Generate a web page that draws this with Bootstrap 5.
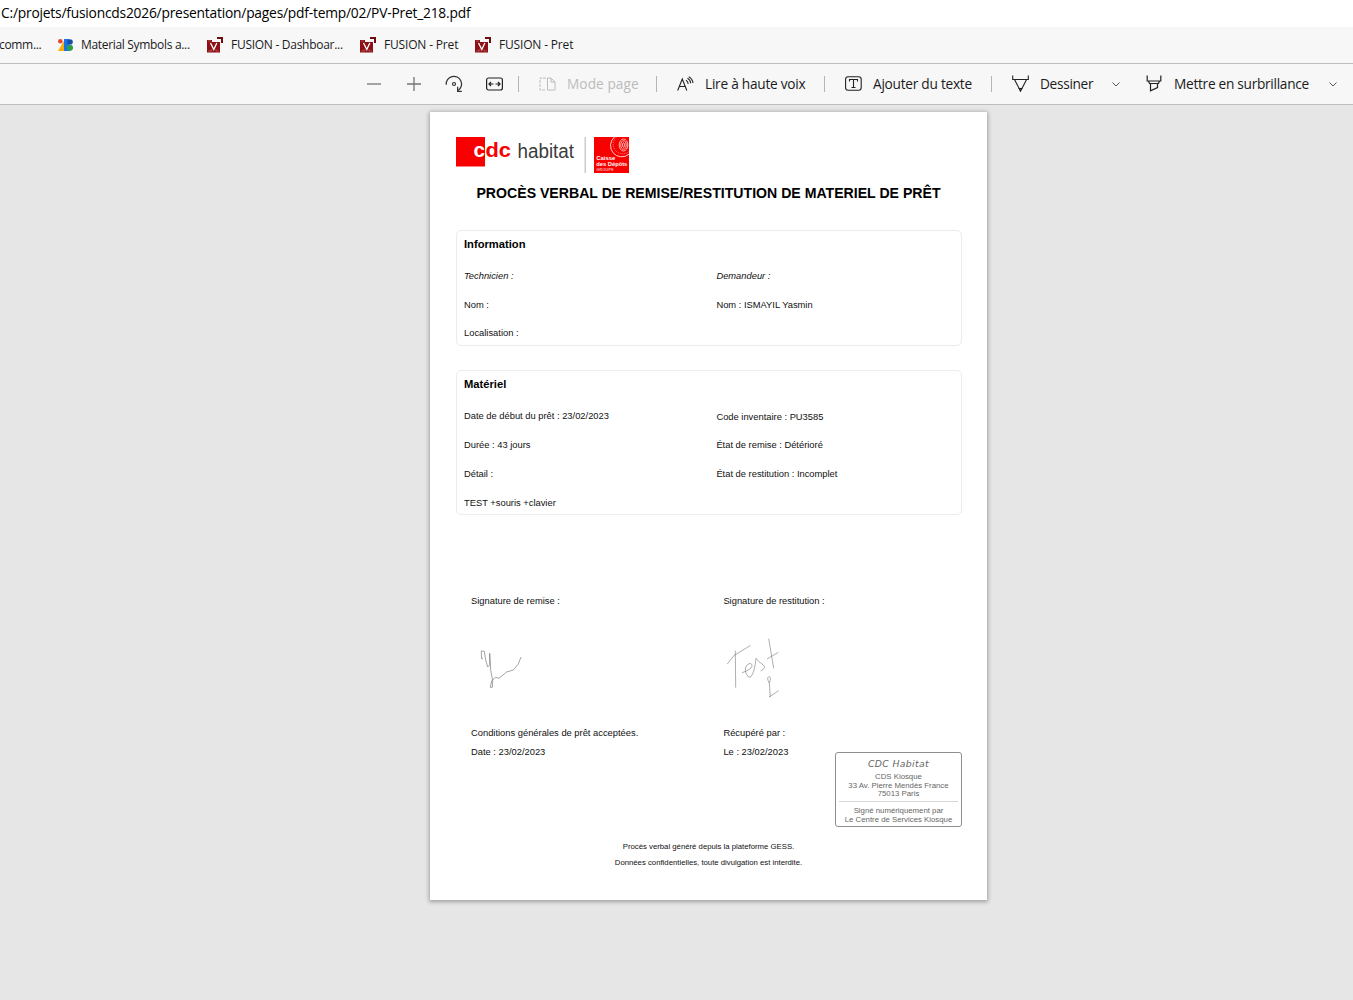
<!DOCTYPE html>
<html lang="fr">
<head>
<meta charset="utf-8">
<title>PV-Pret_218.pdf</title>
<link href="https://cdn.jsdelivr.net/npm/bootstrap@5.3.0/dist/css/bootstrap.min.css" rel="stylesheet">
<style>
body{background:#e6e6e6;font-family:"Open Sans","Noto Sans",sans-serif;color:#1b1b1b;overflow:hidden;height:1000px}
svg{display:block;flex:none}
.addr{height:27px;background:#fff;color:#000;font-size:13.8px;line-height:25px;padding-left:1px;letter-spacing:-.21px}
.favs{height:37px;background:#f7f7f7;border-bottom:1px solid #bdbdbd;font-size:12px;letter-spacing:-.17px}
.favs .fav{height:34px}
.fav svg{margin-right:8px}
.tight{letter-spacing:-.32px}
.tools{height:41px;background:#f7f7f7;border-bottom:1px solid #bdbdbd;font-size:13.7px;letter-spacing:-.26px;padding-left:366px}
.sep{width:1px;height:16px;background:#b5b5b5;flex:none}
.tool svg{margin-right:11px}
.off{color:#bcbcbc;letter-spacing:.05px}
.sheet{width:557px;height:788px;margin:7px 0 0 430px;background:#fff;box-shadow:0 1px 4px 1px rgba(0,0,0,.3);padding:25px 26px 0;font-family:"Liberation Sans",Arial,sans-serif;font-size:9.35px;color:#111;line-height:14px}
.logos{height:36px}
.doc-title{font-size:14.12px;font-weight:700;color:#000;text-align:center;line-height:20px;margin-top:10px}
.box{border:1px solid #ececec;border-radius:5px;width:506px;padding:6px 7px 0}
.box h2{font-size:11.2px;font-weight:700;color:#000;line-height:14px;margin:0 0 11px}
.box .line{line-height:28.6px;height:28.6px}
.b2 .line{line-height:28.9px;height:28.9px}
.half{width:252.4px;flex:none}
.b1{height:116px;margin-top:27px}
.b2{height:145px;margin-top:24px}
.signs{padding-left:15px}
.stamp{width:127px;height:75px;border:1px solid #8e8e8e;border-radius:3px;padding:5px 4px 0;color:#666;font-size:7.8px;line-height:8.7px;text-align:center}
.stamp .hand{font-family:"DejaVu Sans",sans-serif;font-weight:200;font-style:italic;font-size:9.3px;letter-spacing:.35px;line-height:11px;margin-bottom:4px}
.stamp .cut{border-top:1px solid #d8d8d8;margin:2px -1px 5px}
.foot{font-size:7.75px;line-height:16px;text-align:center;margin-top:12px}
</style>
<script src="https://cdn.jsdelivr.net/npm/bootstrap@5.3.0/dist/js/bootstrap.bundle.min.js"></script>
</head>
<body>
<svg width="0" height="0" class="position-absolute"><defs>
<symbol id="fusion" viewBox="0 0 16 16"><path d="M0 3h5v2h8v10.500H0z" fill="#8c1014"/><path d="M10 0h6v6h-2V2h-4z" fill="#6d0d10"/><path d="M1 4h3M1 14h4M9 14h3" stroke="#a94a4a"/><path d="M3.500 6l3.300 6.500 3-6.500" fill="none" stroke="#fff" stroke-width="1.300"/><path d="M3 13h7" stroke="#b96a6a" stroke-width=".6"/></symbol>
</defs></svg>

<div class="addr text-nowrap">C:/projets/fusioncds2026/presentation/pages/pdf-temp/02/PV-Pret_218.pdf</div>

<nav class="favs d-flex align-items-center text-nowrap">
  <div class="fav tight d-flex align-items-center" style="width:59px;margin-left:-1px">comm...</div>
  <div class="fav tight d-flex align-items-center" style="width:149px"><svg width="15" height="12" viewBox="0 0 15 12"><circle cx="2.300" cy="2.300" r="2.300" fill="#ea4335"/><path d="M0 12L6.500 1v11z" fill="#fbad05"/><path d="M6 0h5v12H6z" fill="#1a73e8"/><circle cx="12" cy="3" r="2.800" fill="#174ea6"/><circle cx="12" cy="8.800" r="3.100" fill="#2d9f4b"/></svg>Material Symbols a...</div>
  <div class="fav d-flex align-items-center" style="width:153px;letter-spacing:-.28px"><svg width="16" height="16"><use href="#fusion"/></svg>FUSION - Dashboar...</div>
  <div class="fav d-flex align-items-center" style="width:115px"><svg width="16" height="16"><use href="#fusion"/></svg>FUSION - Pret</div>
  <div class="fav d-flex align-items-center"><svg width="16" height="16"><use href="#fusion"/></svg>FUSION - Pret</div>
</nav>

<div class="tools d-flex align-items-center text-nowrap">
  <svg width="16" height="16" stroke="#767676" stroke-width="1.300"><path d="M1 8h14"/></svg>
  <svg class="ms-4" width="16" height="16" stroke="#767676" stroke-width="1.300"><path d="M1 8h14M8 1v14"/></svg>
  <svg style="margin-left:23px" width="18" height="18" fill="none" stroke="#333" stroke-width="1.200"><path d="M1.200 9.800A7.700 7.700 0 1 1 13 15.500"/><path d="M12.600 11.800v4.500h4.200"/><circle cx="9" cy="9" r="1.500"/></svg>
  <svg style="margin-left:23px" width="17" height="14" fill="none" stroke="#222" stroke-width="1.200"><rect x=".6" y="1" width="15.800" height="12" rx="2"/><path d="M3 7h4.500M9.500 7H14M5 5L3 7l2 2M12 5l2 2-2 2"/></svg>
  <div class="sep" style="margin:0 20px 0 15px"></div>
  <div class="tool off d-flex align-items-center" style="width:117px"><svg width="17" height="14" fill="none" stroke="#bcbcbc"><path d="M7 1H1v12h6" stroke-dasharray="3 1"/><path d="M8.500 1H12l4 4v8H8.500zM12 1v4h4"/></svg>Mode page</div>
  <div class="sep" style="margin-right:20px"></div>
  <div class="tool d-flex align-items-center" style="width:147px"><svg width="17" height="16" fill="none" stroke="#222" stroke-width="1.100"><path d="M.7 14.500L5.300 3 9.800 14.500M2.300 10.500h6M9 4.300q2 1.200 2.200 3.700M10.500 2.300q2.900 1.500 3.200 5M11.800.7q3.600 1.800 4.200 6.300"/></svg>Lire à haute voix</div>
  <div class="sep" style="margin-right:20px"></div>
  <div class="tool d-flex align-items-center" style="width:146px"><svg width="17" height="15" fill="none" stroke="#222" stroke-width="1.100"><rect x=".6" y=".8" width="15.600" height="13.400" rx="2.500"/><path d="M4.500 5.500v-2h8v2M8.500 3.500v8M6.500 11.500h4"/></svg>Ajouter du texte</div>
  <div class="sep" style="margin-right:20px"></div>
  <div class="tool d-flex align-items-center" style="width:100px;letter-spacing:-.32px"><svg width="17" height="17" fill="none" stroke="#222" stroke-width="1.100"><path d="M.7.500v4h15.600v-4M2.500 4.500l4.800 9.300h2.500l4.800-9.300"/><path d="M7.200 13.500h2.600l-1.300 2.800z" fill="#666"/></svg>Dessiner</div>
  <svg width="8" height="5" fill="none" stroke="#555"><path d="M.5.500L4 4 7.500.500"/></svg>
  <div class="tool d-flex align-items-center" style="width:183px;margin-left:26px;letter-spacing:-.29px"><svg width="17" height="17" fill="none" stroke="#222" stroke-width="1.200"><path d="M1.200.500v5.500h13.600v-5.500M2.500 6l1 2.500h9l1-2.500M4.500 8.500v7.300l7-3.300V8.500"/></svg>Mettre en surbrillance</div>
  <svg width="8" height="5" fill="none" stroke="#555"><path d="M.5.500L4 4 7.500.500"/></svg>
</div>

<main class="sheet text-nowrap">
  <div class="logos">
    <svg width="174" height="36" font-family="Liberation Sans,Arial,sans-serif"><path d="M0 0h29v29.500H0z" fill="#f80000"/><text x="17.500" y="20" font-size="21" font-weight="700" fill="#fff" textLength="11.500" lengthAdjust="spacingAndGlyphs">c</text><text x="29.500" y="20" font-size="21" font-weight="700" fill="#f80000" textLength="25.500" lengthAdjust="spacingAndGlyphs">dc</text><text x="61.500" y="21" font-size="19.500" fill="#3b3b3b" textLength="56.500" lengthAdjust="spacingAndGlyphs">habitat</text><path d="M128.500 0h1.500v36h-1.500z" fill="#ccc"/><path d="M138 0h35v36h-35z" fill="#f80000"/><g fill="none" stroke="#fff"><path d="M158.500 0a9.500 9.500 0 0 0 14.500 17.200" stroke-width="1" opacity=".8"/><path d="M160.500 0a8 8 0 0 0 12.500 14.500" stroke-width=".5" stroke-dasharray="1 1"/><ellipse cx="167.500" cy="8" rx="4.300" ry="6" stroke-width=".7"/><ellipse cx="167.500" cy="8" rx="2.700" ry="4.200" stroke-width=".7"/><ellipse cx="167.500" cy="8" rx="1" ry="2.300" stroke-width=".7"/></g><g fill="#fff"><text x="140.300" y="23" font-size="5.700" font-weight="700" textLength="19" lengthAdjust="spacingAndGlyphs">Caisse</text><text x="140.300" y="29" font-size="5.700" font-weight="700" textLength="31" lengthAdjust="spacingAndGlyphs">des Dépôts</text><text x="140.500" y="33.500" font-size="3.500" textLength="17">GROUPE</text></g></svg>
  </div>
  <h1 class="doc-title mb-0">PROCÈS VERBAL DE REMISE/RESTITUTION DE MATERIEL DE PRÊT</h1>

  <section class="box b1">
    <h2>Information</h2>
    <div class="d-flex">
      <div class="half"><div class="line fst-italic">Technicien :</div><div class="line">Nom :</div><div class="line">Localisation :</div></div>
      <div class="half"><div class="line fst-italic">Demandeur :</div><div class="line">Nom : ISMAYIL Yasmin</div></div>
    </div>
  </section>

  <section class="box b2">
    <h2>Matériel</h2>
    <div class="d-flex">
      <div class="half"><div class="line">Date de début du prêt : 23/02/2023</div><div class="line">Durée : 43 jours</div><div class="line">Détail :</div><div class="line">TEST +souris +clavier</div></div>
      <div class="half" style="padding-top:.6px"><div class="line">Code inventaire : PU3585</div><div class="line">État de remise : Détérioré</div><div class="line">État de restitution : Incomplet</div></div>
    </div>
  </section>

  <div class="signs d-flex" style="margin-top:79px">
    <div class="half">Signature de remise :
      <svg class="mt-4" width="60" height="66" fill="none" stroke="#666" stroke-width=".6"><path transform="translate(0 -1)" stroke-linejoin="round" d="M12 27.700h-1.500L10.300 20l3 .3 1.400 8.700 2 7 2-2V22.300l1 16.700 2 10.700-.4 6.600h-2l1.400-6.600 4-3.400 3.300 1 7.700-6.300 6.600-2 5-6L50 26"/></svg>
    </div>
    <div class="half">Signature de restitution :
      <svg class="mt-4" width="70" height="66" fill="none" stroke="#777" stroke-width=".6"><path transform="translate(0 -1)" d="M4.300 33L11 24.500 27.700 14.300M12.300 19.700l.4 37M19 41.700q9-3 10-6.500 0-4-4-2-4 3-2 9 2 5 4.500 4 4-4 5.500-18.900 2 3 7 6.500 4 3-2.300 6.200M45.700 7.700l5 29.600M44 28l11.300-6.700M46.300 52q-3-5-.5-6.500 3 1 .5 6.500l1 14M46 66l9.700-6.300"/></svg>
    </div>
  </div>

  <div class="signs d-flex" style="margin-top:26px;height:103px">
    <div class="half"><div style="line-height:19px">Conditions générales de prêt acceptées.<br>Date : 23/02/2023</div></div>
    <div class="flex-shrink-0" style="width:111.600px;line-height:19px">Récupéré par :<br>Le : 23/02/2023</div>
    <div class="stamp align-self-end flex-shrink-0">
      <div class="hand">CDC Habitat</div>
      <div>CDS Kiosque</div><div>33 Av. Pierre Mendès France</div><div>75013 Paris</div>
      <div class="cut"></div>
      <div>Signé numériquement par</div><div>Le Centre de Services Kiosque</div>
    </div>
  </div>

  <div class="foot">Procès verbal généré depuis la plateforme GESS.<br>Données confidentielles, toute divulgation est interdite.</div>
</main>
</body>
</html>
